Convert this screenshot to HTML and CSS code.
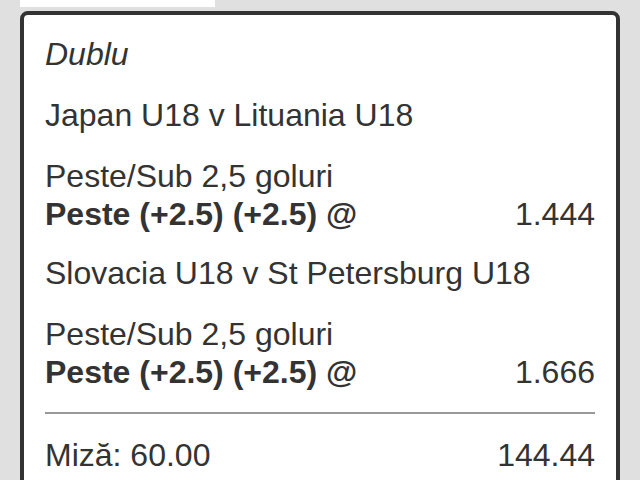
FILE: index.html
```html
<!DOCTYPE html>
<html lang="ro">
<head>
    <meta charset="UTF-8">
    <meta name="viewport" content="width=device-width, initial-scale=1.0">
    <title>Bilet</title>
    <link rel="stylesheet" href="styles.css">
</head>
<body>
    <div class="top-strip"></div>
    <div class="slip">
        <div class="slip-type">Dublu</div>

        <div class="event">Japan U18 v Lituania U18</div>
        <div class="selection">
            <div class="market">Peste/Sub 2,5 goluri</div>
            <div class="pick">
                <span class="pick-name">Peste (+2.5) (+2.5) @</span>
                <span class="odds">1.444</span>
            </div>
        </div>

        <div class="event">Slovacia U18 v St Petersburg U18</div>
        <div class="selection">
            <div class="market">Peste/Sub 2,5 goluri</div>
            <div class="pick">
                <span class="pick-name">Peste (+2.5) (+2.5) @</span>
                <span class="odds">1.666</span>
            </div>
        </div>

        <div class="divider"></div>

        <div class="stake">
            <span>Miză: 60.00</span>
            <span>144.44</span>
        </div>
    </div>
</body>
</html>
```

FILE: styles.css
```css
body {
    background-color: #e0e0e0;
    font-family: 'Liberation Sans', Arial, sans-serif;
    color: #333333;
    margin: 0;
    overflow: hidden;
}
.top-strip {
    margin-left: 20px;
    width: 195px;
    height: 7px;
    background-color: #ffffff;
}
.slip {
    margin: 4px 20px 0;
    padding: 20px 21px 40px;
    border: 4px solid #333333;
    border-radius: 8px;
    background-color: #ffffff;
    font-size: 32px;
    line-height: 38px;
}
.slip-type {
    font-style: italic;
    margin-bottom: 23px;
}
.event {
    margin-bottom: 23px;
}
.selection {
    margin-bottom: 21px;
}
.pick {
    display: flex;
    justify-content: space-between;
}
.pick-name {
    font-weight: bold;
}
.divider {
    height: 2px;
    background-color: #999999;
    margin-top: 3px;
    margin-bottom: 22px;
}
.stake {
    display: flex;
    justify-content: space-between;
}
```
